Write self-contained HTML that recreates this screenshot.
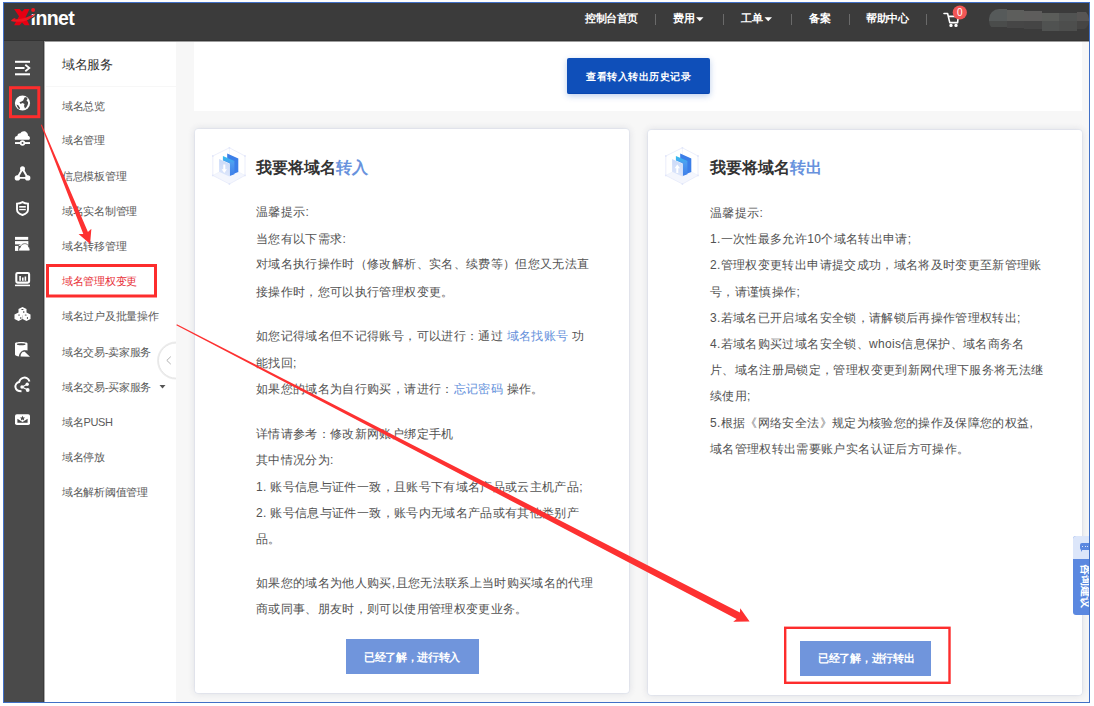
<!DOCTYPE html>
<html><head><meta charset="utf-8">
<style>
*{margin:0;padding:0;box-sizing:border-box}
html,body{width:1094px;height:706px;overflow:hidden;background:#fff;font-family:"Liberation Sans",sans-serif;position:relative}
.a{position:absolute}
#frame{left:3px;top:2px;width:1087px;height:701px;border:1px solid #4170c6}
#hdr{left:4px;top:3px;width:1085px;height:38px;background:#3b3b3b;border-bottom:1px solid #333}
#col{left:4px;top:41px;width:39px;height:662px;background:#4a4a4a}
#colline{left:43px;top:41px;width:1px;height:662px;background:#3c3c3c}
#sub{left:44px;top:42px;width:132px;height:661px;background:#fff}
#main{left:176px;top:42px;width:913px;height:661px;background:#f7f7f7}
.card{background:#fff;border-radius:3px;box-shadow:0 0 7px rgba(200,202,210,.65),0 0 0 .5px rgba(220,226,245,.8)}
.nav{color:#fff;font-size:11px;font-weight:bold;letter-spacing:-.5px;top:12px;white-space:nowrap;line-height:13px}
.sep{top:14px;width:1px;height:11px;background:#6a6a6a}
.menu{left:62px;font-size:11px;letter-spacing:-.3px;color:#5a5a5a;white-space:nowrap;line-height:14px}
.txt{font-size:12px;letter-spacing:.35px;color:#525252;white-space:nowrap;line-height:14px}
.lnk{color:#638fdb}
svg{position:absolute;left:0;top:0}
</style></head><body>
<div id="hdr" class="a"></div>
<div id="col" class="a"></div>
<div id="colline" class="a"></div>
<div id="sub" class="a"></div>
<div class="a" style="left:44px;top:42px;width:1px;height:661px;background:#ababab"></div>
<div id="main" class="a"></div>
<div class="a" style="left:44px;top:41px;width:1045px;height:1px;background:#9c9c9c"></div>

<!-- header nav -->
<div class="a nav" style="left:585px">控制台首页</div>
<div class="a sep" style="left:655px"></div>
<div class="a nav" style="left:673px">费用</div>
<div class="a sep" style="left:723px"></div>
<div class="a nav" style="left:741px">工单</div>
<div class="a sep" style="left:791px"></div>
<div class="a nav" style="left:809px">备案</div>
<div class="a sep" style="left:849px"></div>
<div class="a nav" style="left:866px">帮助中心</div>
<div class="a sep" style="left:926px"></div>

<!-- username blob -->
<div class="a" style="left:989px;top:9px;width:100px;height:22px;border-radius:10px;overflow:hidden;filter:blur(.6px)">
 <div class="a" style="left:0;top:0;width:17.5px;height:12px;background:#565a5a"></div>
 <div class="a" style="left:17.5px;top:1px;width:17.5px;height:11px;background:#5d5e5c"></div>
 <div class="a" style="left:35px;top:2px;width:17.5px;height:10px;background:#5e5d5c"></div>
 <div class="a" style="left:52.5px;top:4px;width:17.5px;height:8px;background:#5b5d5a"></div>
 <div class="a" style="left:70px;top:4px;width:17.5px;height:8px;background:#515352"></div>
 <div class="a" style="left:87.5px;top:3px;width:17.5px;height:9px;background:#575554"></div>
 <div class="a" style="left:0;top:12px;width:17.5px;height:6px;background:#4a4c4b"></div>
 <div class="a" style="left:17.5px;top:12px;width:17.5px;height:7px;background:#464646"></div>
 <div class="a" style="left:35px;top:12px;width:17.5px;height:8px;background:#454545"></div>
 <div class="a" style="left:52.5px;top:12px;width:17.5px;height:10px;background:#505251"></div>
 <div class="a" style="left:70px;top:12px;width:17.5px;height:10px;background:#4d4e4d"></div>
 <div class="a" style="left:87.5px;top:12px;width:17.5px;height:8px;background:#464544"></div>
</div>

<!-- sub menu -->
<div class="a" style="left:62px;top:58px;font-size:13px;letter-spacing:-.5px;color:#333;line-height:14px">域名服务</div>
<div class="a" style="left:46px;top:86px;width:130px;height:1px;background:#f7f7f7"></div>
<div class="a menu" style="top:99px">域名总览</div>
<div class="a menu" style="top:133px">域名管理</div>
<div class="a menu" style="top:169px">信息模板管理</div>
<div class="a menu" style="top:204px">域名实名制管理</div>
<div class="a menu" style="top:239px">域名转移管理</div>
<div class="a menu" style="top:274px;color:#e8323a">域名管理权变更</div>
<div class="a menu" style="top:309px">域名过户及批量操作</div>
<div class="a menu" style="top:345px">域名交易-卖家服务</div>
<div class="a menu" style="top:380px">域名交易-买家服务</div>
<div class="a menu" style="top:415px">域名PUSH</div>
<div class="a menu" style="top:450px">域名停放</div>
<div class="a menu" style="top:485px">域名解析阈值管理</div>

<!-- top card -->
<div class="a" style="left:194px;top:42px;width:888px;height:69px;background:#fff"></div>
<div class="a" style="left:567px;top:58px;width:143px;height:36px;background:#0f4fb9;border-radius:2px;box-shadow:0 2px 6px rgba(15,79,185,.28);border-bottom:1px solid #0846b0"></div>
<div class="a" style="left:586px;top:70px;font-size:10px;letter-spacing:.55px;font-weight:bold;color:#fff;line-height:13px;white-space:nowrap">查看转入转出历史记录</div>

<!-- cards -->
<div class="a card" style="left:195px;top:129px;width:434px;height:564px"></div>
<div class="a card" style="left:648px;top:130px;width:434px;height:565px"></div>

<!-- left card text -->
<div class="a" style="left:256px;top:159px;font-size:16px;font-weight:bold;color:#333;line-height:17px;white-space:nowrap">我要将域名<span style="color:#6892dd">转入</span></div>
<div class="a txt" style="left:256px;top:205px">温馨提示:</div>
<div class="a txt" style="left:256px;top:232px">当您有以下需求:</div>
<div class="a txt" style="left:256px;top:257px">对域名执行操作时（修改解析、实名、续费等）但您又无法直</div>
<div class="a txt" style="left:256px;top:285px">接操作时，您可以执行管理权变更。</div>
<div class="a txt" style="left:256px;top:329px">如您记得域名但不记得账号，可以进行：通过 <span class="lnk">域名找账号</span> 功</div>
<div class="a txt" style="left:256px;top:356px">能找回;</div>
<div class="a txt" style="left:256px;top:382px">如果您的域名为自行购买，请进行：<span class="lnk">忘记密码</span> 操作。</div>
<div class="a txt" style="left:256px;top:427px">详情请参考：修改新网账户绑定手机</div>
<div class="a txt" style="left:256px;top:453px">其中情况分为:</div>
<div class="a txt" style="left:256px;top:480px">1. 账号信息与证件一致，且账号下有域名产品或云主机产品;</div>
<div class="a txt" style="left:256px;top:506px">2. 账号信息与证件一致，账号内无域名产品或有其他类别产</div>
<div class="a txt" style="left:256px;top:532px">品。</div>
<div class="a txt" style="left:256px;top:576px">如果您的域名为他人购买,且您无法联系上当时购买域名的代理</div>
<div class="a txt" style="left:256px;top:602px">商或同事、朋友时，则可以使用管理权变更业务。</div>
<div class="a" style="left:346px;top:639px;width:133px;height:35px;background:#7095dc"></div>
<div class="a" style="left:364px;top:651px;font-size:11px;font-weight:bold;letter-spacing:-.35px;color:#fff;line-height:13px;white-space:nowrap">已经了解，进行转入</div>

<!-- right card text -->
<div class="a" style="left:710px;top:159px;font-size:16px;font-weight:bold;color:#333;line-height:17px;white-space:nowrap">我要将域名<span style="color:#6892dd">转出</span></div>
<div class="a txt" style="left:710px;top:206px">温馨提示:</div>
<div class="a txt" style="left:710px;top:232px">1.一次性最多允许10个域名转出申请;</div>
<div class="a txt" style="left:710px;top:258px">2.管理权变更转出申请提交成功，域名将及时变更至新管理账</div>
<div class="a txt" style="left:710px;top:285px">号，请谨慎操作;</div>
<div class="a txt" style="left:710px;top:311px">3.若域名已开启域名安全锁，请解锁后再操作管理权转出;</div>
<div class="a txt" style="left:710px;top:337px">4.若域名购买过域名安全锁、whois信息保护、域名商务名</div>
<div class="a txt" style="left:710px;top:363px">片、域名注册局锁定，管理权变更到新网代理下服务将无法继</div>
<div class="a txt" style="left:710px;top:389px">续使用;</div>
<div class="a txt" style="left:710px;top:416px">5.根据《网络安全法》规定为核验您的操作及保障您的权益,</div>
<div class="a txt" style="left:710px;top:442px">域名管理权转出需要账户实名认证后方可操作。</div>
<div class="a" style="left:800px;top:641px;width:131px;height:35px;background:#7095dc"></div>
<div class="a" style="left:818px;top:652px;font-size:11px;font-weight:bold;letter-spacing:-.3px;color:#fff;line-height:13px;white-space:nowrap">已经了解，进行转出</div>

<!-- float tab -->
<div class="a" style="left:1073px;top:536px;width:20px;height:79px;border-radius:3px 0 0 3px;background:#5b88e0;overflow:hidden">
  <div class="a" style="left:0;top:0;width:20px;height:23px;background:#dce6fa"></div>
  <div class="a" style="left:6.5px;top:6.7px;width:12px;height:7.5px;border-radius:2px;background:#5b88e0"></div><div class="a" style="left:8px;top:13px;width:0;height:0;border-left:2px solid #5b88e0;border-bottom:3px solid transparent;border-right:2px solid transparent"></div><div class="a" style="left:9px;top:9.8px;width:1.3px;height:1.3px;background:#dce6fa"></div><div class="a" style="left:11.5px;top:9.8px;width:1.3px;height:1.3px;background:#dce6fa"></div><div class="a" style="left:14px;top:9.8px;width:1.3px;height:1.3px;background:#dce6fa"></div>
</div>
<div class="a" style="left:1064px;top:579.5px;width:44px;height:12px;transform:rotate(90deg);transform-origin:22px 6px;font-size:11px;font-weight:bold;color:#fff;line-height:12px;white-space:nowrap">咨询建议</div>

<svg width="1094" height="706" viewBox="0 0 1094 706">
  <!-- logo -->
  <g>
    <text x="30.6" y="25.4" font-family="Liberation Sans" font-weight="bold" font-size="19.5" fill="#fff" letter-spacing="-0.6">ınnet</text>
    <path d="M14.1 9 H19.6 L22 11.8 L24.6 9 H29.6 L25.5 17.3 L29.6 25.3 H24.8 L22 22.6 L19.6 25.3 H14.1 L19 16.3 Z" fill="#e60012"/>
    <path d="M27.5 20.2 C31 18.8 34 16.8 37 14.3" fill="none" stroke="#3b3b3b" stroke-width="1.3"/>
    <path d="M10.8 20.9 C11.8 19.3 13.5 18.2 15.8 17.9 L14.6 19.3 C19 19.2 23 18.4 26.1 17.4 C29.5 16.4 32.5 15 35.6 13.3 C33.5 16.2 31 18.4 27.9 19.9 C23 21.9 16.5 22.4 10.8 20.9 Z" fill="#ee1520"/>
    <circle cx="33.1" cy="10.05" r="2" fill="#ee1520"/>
  </g>
  <!-- cart -->
  <g fill="none" stroke="#fff" stroke-width="1.6" stroke-linecap="round" stroke-linejoin="round">
    <path d="M944 13.5 H947.6 L949.8 22.6 H957.6 L958.2 16.4 H948.4"/>
    <circle cx="951" cy="25.4" r=".9" fill="#fff"/>
    <circle cx="956" cy="25.4" r=".9" fill="#fff"/>
  </g>
  <circle cx="959.8" cy="12.5" r="7.1" fill="#f25656"/>
  <text x="959.8" y="16" font-family="Liberation Sans" font-size="10" fill="#fff" text-anchor="middle">0</text>
  <!-- nav triangles -->
  <path d="M696 17.2 H703.5 L699.75 21.2 Z" fill="#fff"/>
  <path d="M764.5 17.2 H772 L768.25 21.2 Z" fill="#fff"/>

  <!-- sidebar icons -->
  <g fill="#fff" stroke="none">
    <!-- menu -->
    <rect x="15" y="60.8" width="15" height="2"/>
    <rect x="15" y="67" width="9.5" height="2"/>
    <rect x="15" y="73.3" width="15" height="2"/>
    <path d="M25.3 64.8 L29.3 68 L25.3 71.2" fill="none" stroke="#fff" stroke-width="1.8" stroke-linejoin="miter"/>
    <!-- globe -->
    <circle cx="22.5" cy="103" r="7.6"/>
    <path d="M24.5 97.5 C26 97 27.5 97.8 27.5 99 L26.5 100.5 L28 102 C28.5 103.5 27.5 105.5 26.5 107 L25 108.5 L24 106 L24.5 104 L22.5 103 L20.5 104 L19.5 102.3 L21.5 101.5 L23.2 100.5 L23.8 99 Z" fill="#4a4a4a"/>
    <path d="M16.5 104.5 L18.5 105.5 L20 108 L19.5 109.3 C18 108.5 17 106.5 16.5 104.5 Z" fill="#4a4a4a"/>
    <!-- cloud network -->
    <path d="M15.5 139.7 C14.2 139.7 14.6 135.6 17.3 135.9 C17.6 133.6 19.5 133 20.4 133.3 C21.4 130.8 25.8 130.2 27.3 133.3 C28.2 134.2 27.8 135.4 28 135.8 C30.3 136 30.5 139.7 29 139.7 Z"/>
    <rect x="15" y="142.1" width="15" height="1.9"/>
    <circle cx="22.5" cy="143" r="2.7"/>
    <circle cx="22.5" cy="143" r="1" fill="#4a4a4a"/>
    <!-- triangle -->
    <path d="M22.5 168.8 L17.4 177.9 H27.7 Z" fill="none" stroke="#fff" stroke-width="1.9"/>
    <circle cx="22.5" cy="168.8" r="2.5"/>
    <circle cx="17.4" cy="177.9" r="2.7"/>
    <circle cx="27.7" cy="177.9" r="2.7"/>
    <!-- shield -->
    <path d="M22.5 202.2 C20.5 203.3 18.5 203.6 17 203.6 V209.5 C17 212 19.5 214 22.5 215 C25.5 214 28 212 28 209.5 V203.6 C26.5 203.6 24.5 203.3 22.5 202.2 Z" fill="none" stroke="#fff" stroke-width="1.9"/>
    <rect x="19.2" y="206" width="6.6" height="1.6"/>
    <rect x="19.2" y="208.9" width="6.6" height="1.3"/>
    <!-- server cloud -->
    <rect x="15" y="236.9" width="13.2" height="2.9"/>
    <rect x="15" y="241.1" width="13.2" height="3.3"/>
    <rect x="15" y="245.9" width="3.4" height="5"/>
    <path d="M18.4 245.9 H28.2 V241.1 L27 243 C24 242.5 21 243.5 18.4 245.9 Z"/>
    <path d="M19.5 250.9 C18.2 250.5 18.5 247.8 20.2 247.6 C20.5 245 22.5 244 24.2 243.7 C26.6 243.3 28.6 244.8 28.8 247.3 C30.2 247.8 30.4 250.6 29.2 250.9 Z" stroke="#4a4a4a" stroke-width="0.7"/>
    <!-- monitor -->
    <rect x="16.3" y="273" width="12.8" height="9.6" rx="1.3" fill="none" stroke="#fff" stroke-width="2.1"/>
    <rect x="19.3" y="276" width="1.6" height="4.8"/>
    <rect x="22" y="277.5" width="1.6" height="3.3"/>
    <rect x="24.6" y="276.5" width="1.6" height="4.3"/>
    <rect x="15" y="284.6" width="15" height="1.6"/>
    <!-- cubes -->
    <path d="M22.5 307 L26.5 309 V313.5 L22.5 315.5 L18.5 313.5 V309 Z"/>
    <path d="M18.5 312.5 L22.5 314.5 V319 L18.5 321 L14.5 319 V314.5 Z"/>
    <path d="M26.5 312.5 L30.5 314.5 V319 L26.5 321 L22.5 319 V314.5 Z"/>
    <g fill="#4a4a4a"><ellipse cx="22.4" cy="309.5" rx="1.2" ry=".6"/><ellipse cx="23.8" cy="312" rx=".6" ry="1"/><ellipse cx="19" cy="315" rx="1" ry=".6"/><ellipse cx="20.8" cy="318" rx=".6" ry="1"/><ellipse cx="25.7" cy="315" rx="1" ry=".6"/><ellipse cx="27.4" cy="318" rx=".6" ry="1"/></g>
    <!-- database R -->
    <path d="M15 343.5 C15 341.5 27.5 341.5 27.5 343.5 V350.5 C25 350 23 350.2 21 352.5 C20 353.5 19.5 355 19.3 356.5 C17 356.3 15 355.5 15 354.5 Z"/>
    <ellipse cx="21.2" cy="344.3" rx="4.3" ry="1" fill="#4a4a4a"/>
    <path d="M20.5 356.5 C20.5 353.5 22 351.5 24.5 351.5 L30 356.8 Z"/>
    <path d="M19.3 356.8 C19.5 353 21.5 351 24.5 350.8" fill="none" stroke="#4a4a4a" stroke-width="0.9"/>
    <!-- cloud share -->
    <path d="M29.5 381.5 C28.5 378 25.5 377 23 377.8 C21 378.5 19.5 380 19.2 382 C16.5 382.5 15 385 15.5 387.5 C16 390 18 391.3 21.5 391.3" fill="none" stroke="#fff" stroke-width="1.9"/>
    <circle cx="27.2" cy="384.3" r="1.7"/>
    <circle cx="22" cy="387" r="1.7"/>
    <circle cx="27.7" cy="390" r="1.9"/>
    <path d="M27.2 384.3 L22 387 L27.7 390" fill="none" stroke="#fff" stroke-width="1.1"/>
    <!-- mail star -->
    <rect x="15" y="414.2" width="15" height="10.8" rx="1.8"/>
    <path d="M17.4 418.8 L22.5 422 L27.6 418.8 V422.8 H17.4 Z" fill="#4a4a4a"/>
    <path d="M22.5 415.8 L23.3 417.4 L25 417.6 L23.8 418.7 L24.1 420.4 L22.5 419.6 L20.9 420.4 L21.2 418.7 L20 417.6 L21.7 417.4 Z" fill="#4a4a4a"/>
  </g>

  <!-- menu dropdown triangle + collapse button -->
  <path d="M159.5 385 H165.5 L162.5 388.5 Z" fill="#555"/>
  <path d="M176 342.6 A18 18 0 0 0 176 378.6" fill="#fff" stroke="#ececec" stroke-width="2" style="filter:blur(.5px)"/><path d="M176 343.1 A17.5 17.5 0 0 0 176 378.1" fill="#fff" stroke="#e3e3e3" stroke-width=".8"/>
  <path d="M170.8 356.6 L166.8 360.4 L170.8 364.2" fill="none" stroke="#a8a8a8" stroke-width="0.9"/>

  <!-- card icons -->
  <g id="ic1">
    <defs>
      <linearGradient id="gm" x1="0" y1="0" x2="0" y2="1"><stop offset="0" stop-color="#2fc0ee"/><stop offset=".35" stop-color="#4f9cf0"/><stop offset="1" stop-color="#3f7fe9"/></linearGradient>
      <linearGradient id="gf" x1="0" y1="0" x2="0" y2="1"><stop offset="0" stop-color="#cbdaf8"/><stop offset="1" stop-color="#dde6fb"/></linearGradient>
    </defs>
    <path d="M212.8 175.4 L229.4 184 L245 175.4 L229.4 167 Z" fill="#f4f6fd"/>
    <path d="M229.4 147.8 L245 156 V175.4 L229.4 184 L212.8 175.4 V156 Z" fill="none" stroke="#e6eafa" stroke-width="0.8"/>
    <path d="M229.4 147.8 V165 M212.8 175.4 L229.4 167 L245 175.4" fill="none" stroke="#edf0fb" stroke-width="0.7"/>
    <g fill="#e1e6f9"><circle cx="229.4" cy="147.8" r=".9"/><circle cx="245" cy="156" r=".9"/><circle cx="245" cy="175.4" r=".9"/><circle cx="229.4" cy="184" r=".9"/><circle cx="212.8" cy="175.4" r=".9"/><circle cx="212.8" cy="156" r=".9"/></g>
    <path d="M227.2 153.4 L238.3 158.5 V172.1 L232 174.5 L232 162 L227.2 159.5 Z" fill="#3b7ee8"/>
    <path d="M222.9 156 L234.4 161 V174.2 L229.7 176 V163.5 L222.9 160.5 Z" fill="url(#gm)"/>
    <path d="M219.1 159.1 L229.7 164 V176.8 L219.1 171.7 Z" fill="url(#gf)"/>
    </g>

  <use href="#ic1" x="453" y="0"/>
  <path d="M223.3 164.5 H225.3 V169.2 H227 L224.3 173 L221.6 169.2 H223.3 Z" fill="#fff"/>
  <path d="M676.3 173 H678.3 V168.3 H680 L677.3 164.5 L674.6 168.3 H676.3 Z" fill="#fff"/>

  <!-- red boxes -->
  <g fill="none" stroke="#fd2d2d">
    <rect x="10.5" y="87.7" width="28.3" height="29" stroke-width="3"/>
    <rect x="47.5" y="265.5" width="108" height="30.5" stroke-width="3"/>
    <rect x="785.2" y="627.8" width="164.3" height="55" stroke-width="2.4"/>
  </g>

  <!-- arrows -->
  <g fill="#fd3131">
    <path d="M40.84 124.89 L83.32 233.93 L78.60 234.02 L90.10 243.90 L91.37 228.79 L87.94 232.03 L41.76 124.51 Z"/>
    <path d="M176.32 325.33 L736.58 618.91 L733.23 621.68 L749.60 621.60 L740.22 608.18 L739.89 612.52 L176.88 324.27 Z"/>
  </g>
</svg>
<div class="a" style="left:1090px;top:0;width:4px;height:706px;background:#fff"></div>
<div class="a" style="left:0;top:703px;width:1094px;height:3px;background:#fff"></div>
<div id="frame" class="a"></div>
</body></html>
